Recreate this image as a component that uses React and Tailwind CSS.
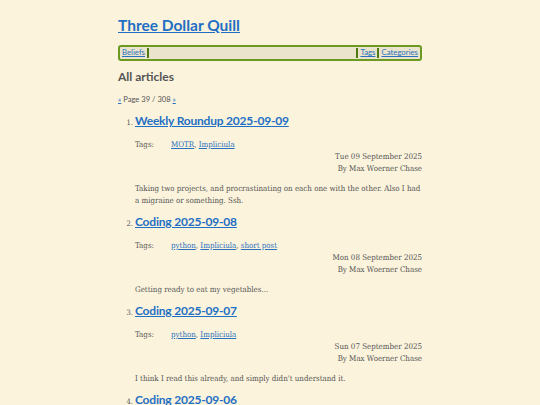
import React from 'react';

const articles = [
  {
    n: 1,
    title: 'Weekly Roundup 2025-09-09',
    tags: ['MOTR', 'Impliciula'],
    date: 'Tue 09 September 2025',
    summary:
      'Taking two projects, and procrastinating on each one with the other. Also I had a migraine or something. Ssh.',
  },
  {
    n: 2,
    title: 'Coding 2025-09-08',
    tags: ['python', 'Impliciula', 'short post'],
    date: 'Mon 08 September 2025',
    summary: 'Getting ready to eat my vegetables...',
  },
  {
    n: 3,
    title: 'Coding 2025-09-07',
    tags: ['python', 'Impliciula'],
    date: 'Sun 07 September 2025',
    summary: "I think I read this already, and simply didn't understand it.",
  },
  {
    n: 4,
    title: 'Coding 2025-09-06',
    tags: [],
    date: '',
    summary: '',
  },
];

const sans = { fontFamily: 'Lato, "Open Sans", sans-serif' };
const serif = { fontFamily: '"DejaVu Serif Condensed", "DejaVu Serif", serif' };

function Article({ a }) {
  return (
    <li className="flex">
      <span className="w-[17px] shrink-0 pt-[4px] pr-[2px] text-right text-[7.5px] text-[#555]" style={serif}>
        {a.n}.
      </span>
      <div className="flex-1">
        <h2 className="text-[12px] leading-[16px] font-bold tracking-[-0.2px]" style={sans}>
          <a href="#" className="text-[#1f6fc4] underline">
            {a.title}
          </a>
        </h2>
        {a.tags.length > 0 && (
          <div className="text-[7.9px] leading-[12px] text-[#555]" style={serif}>
            <div className="mt-[10px] flex">
              <span className="w-[36px] shrink-0">Tags:</span>
              <span>
                {a.tags.map((t, i) => (
                  <React.Fragment key={t}>
                    <a href="#" className="text-[#2a72c0] underline">
                      {t}
                    </a>
                    {i < a.tags.length - 1 ? ', ' : ''}
                  </React.Fragment>
                ))}
              </span>
            </div>
            <div className="text-right">{a.date}</div>
            <div className="text-right">By Max Woerner Chase</div>
            <p className="mt-[8px] mb-[7px]">{a.summary}</p>
          </div>
        )}
      </div>
    </li>
  );
}

export default function App() {
  return (
    <div className="min-h-[405px] bg-[#fbf3dc]">
      <div className="mx-auto w-[304px] pt-[14px]">
        <h1 className="text-[15.5px] leading-[22px] font-bold" style={sans}>
          <a href="#" className="text-[#1f6fc4] underline">
            Three Dollar Quill
          </a>
        </h1>
        <nav
          className="mt-[9px] flex h-[16px] items-center rounded-[3px] border-2 border-[#6b9a22] bg-[#ebe4cc] px-[2px] text-[7.8px]"
          style={sans}
        >
          <a href="#" className="pr-[2px] text-[#2a72c0] underline">
            Beliefs
          </a>
          <span className="h-[10px] w-[2px] bg-[#4f7a12]" />
          <span className="flex-1" />
          <span className="h-[10px] w-[2px] bg-[#4f7a12]" />
          <a href="#" className="px-[2px] text-[#2a72c0] underline">
            Tags
          </a>
          <span className="h-[10px] w-[2px] bg-[#4f7a12]" />
          <a href="#" className="pl-[2px] text-[#2a72c0] underline">
            Categories
          </a>
        </nav>
        <h2 className="mt-[8px] text-[12px] leading-[16px] font-bold text-[#555]" style={sans}>
          All articles
        </h2>
        <p className="mt-[9px] text-[7.6px] leading-[10px] text-[#555]" style={sans}>
          <a href="#" className="text-[#2a72c0] underline">«</a> Page 39 / 308{' '}
          <a href="#" className="text-[#2a72c0] underline">»</a>
        </p>
        <ol className="mt-[9px]">
          {articles.map((a) => (
            <Article key={a.n} a={a} />
          ))}
        </ol>
      </div>
    </div>
  );
}
